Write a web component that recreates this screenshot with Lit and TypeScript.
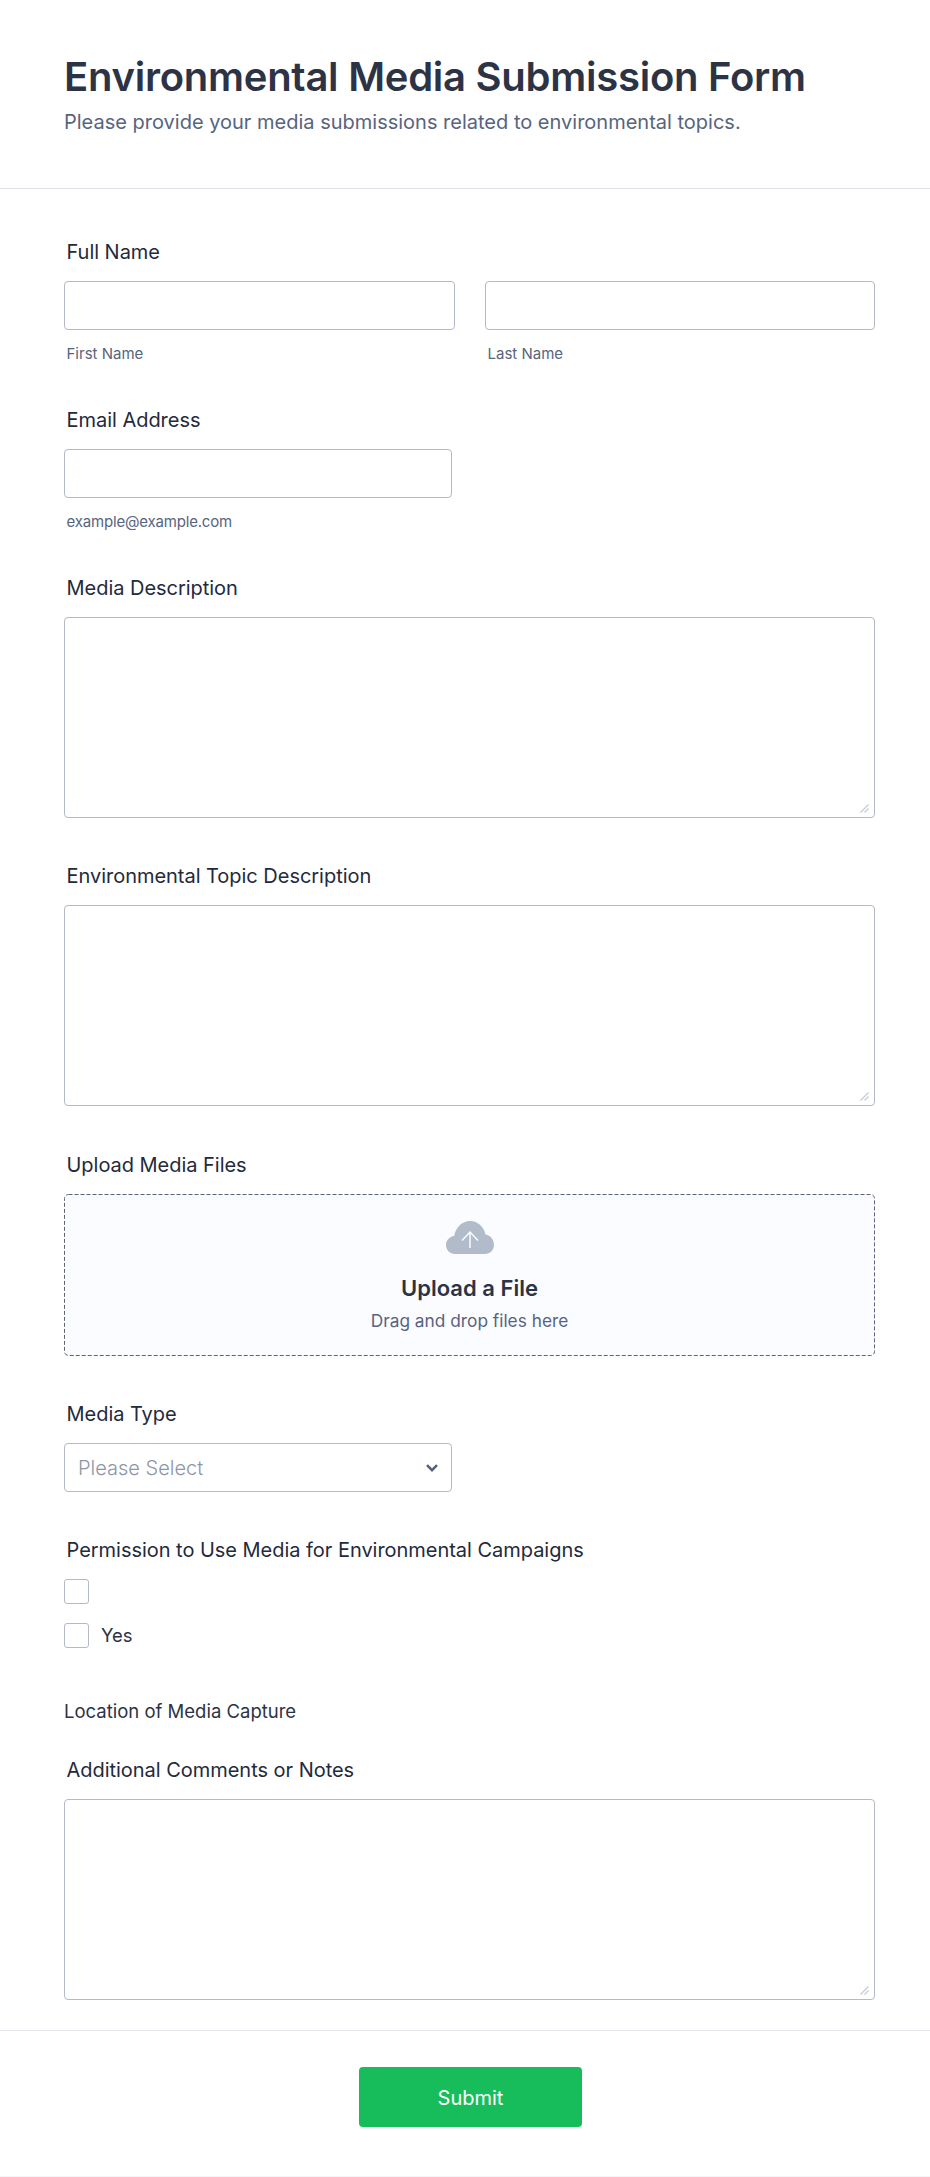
import { LitElement, html, css } from "lit";
import { customElement } from "lit/decorators.js";

@customElement("app-root")
export class AppRoot extends LitElement {
  static styles = css`
    :host { display: block; width: 930px; height: 2177px; background: #fff; font-family: Inter, "Liberation Sans", sans-serif; color: #2c3345; box-sizing: border-box; overflow: hidden; }
    * { box-sizing: border-box; }
    header { height: 189px; padding: 55px 55px 0 64px; border-bottom: 1px solid #dfe0e8; }
    h1 { margin: 0; font-size: 40px; line-height: 44px; font-weight: 600; letter-spacing: -0.26px; }
    .sub { margin: 9px 0 0; font-size: 20px; line-height: 28px; color: #57647e; font-weight: 400; }
    main { padding: 50px 55px 0 64px; }
    .field { margin-bottom: 45px; }
    .field.gap46 { margin-bottom: 46px; }
    .field.last-check { margin-bottom: 51px; }
    .field.end { margin-bottom: 30px; }
    label, .label { display: block; height: 25px; padding-top: 1px; line-height: 24px; margin: 0 0 17px 2.5px; font-size: 20px; letter-spacing: -0.03px; font-weight: 400; color: #232a3c; }
    input.text, textarea, .select { display: block; border: 1px solid #b4b9c8; border-radius: 4px; background: #fff; outline: none; width: 100%; }
    input.text { height: 49px; }
    .area { position: relative; }
    textarea { height: 201px; padding: 8px; resize: none; }
    .grip { position: absolute; right: 6px; bottom: 5px; width: 9px; height: 9px; }
    .narrow { width: 388px; }
    .two { display: grid; grid-template-columns: 391px 390px; gap: 30px; }
    .hint { display: block; margin: 16px 0 0 2.5px; font-size: 15px; line-height: 16px; color: #57647e; }
    .hint.mail { letter-spacing: -0.18px; }
    .upload { position: relative; height: 162px; border-radius: 4px; background: #fbfcff; display: flex; flex-direction: column; align-items: center; padding-top: 27px; }
    .dash { position: absolute; inset: 0; width: 811px; height: 162px; }
    .cloud { display: block; position: relative; }
    .upload b { margin-top: 20px; font-size: 22px; line-height: 28px; font-weight: 600; }
    .upload span { margin-top: 7px; font-size: 17.3px; line-height: 24px; color: #57647e; }
    .select { width: 388px; height: 49px; display: flex; align-items: center; justify-content: space-between; padding: 0 13px; font-size: 20px; font-weight: 300; color: #8d96a8; }
    .checks { display: flex; flex-direction: column; gap: 19px; }
    .check { display: flex; align-items: center; gap: 12px; height: 25px; font-size: 18.4px; color: #2c3345; }
    .check span { padding-bottom: 2px; }
    .check i { display: block; width: 25px; height: 25px; border: 1px solid #b4b9c8; border-radius: 3px; background: #fff; }
    .loc { margin: 0 0 34px; font-size: 18.5px; line-height: 24px; color: #2c3345; }
    footer { border-top: 1px solid #e6e6ec; padding-top: 36px; display: flex; justify-content: center; height: 147px; border-bottom: 1px solid #f5f5f8; }
    button { width: 223px; height: 60px; padding: 2px 0 0; border: none; border-radius: 4px; background: #18bd5b; color: #fff; font: 400 20px Inter, "Liberation Sans", sans-serif; margin-left: 11px; }
  `;

  private area() {
    return html`<div class="area">
      <textarea></textarea>
      <svg class="grip" viewBox="0 0 9 9"><path fill="none" stroke="#c6c9d6" stroke-width="1.200" d="M0.500 8.500L8.500 0.500M4.500 8.500L8.500 4.500"/></svg>
    </div>`;
  }

  render() {
    return html`
      <header>
        <h1>Environmental Media Submission Form</h1>
        <p class="sub">Please provide your media submissions related to environmental topics.</p>
      </header>
      <main>
        <div class="field">
          <span class="label">Full Name</span>
          <div class="two">
            <div><input class="text" type="text" /><span class="hint">First Name</span></div>
            <div><input class="text" type="text" /><span class="hint">Last Name</span></div>
          </div>
        </div>
        <div class="field narrow">
          <label>Email Address</label>
          <input class="text" type="email" />
          <span class="hint mail">example@example.com</span>
        </div>
        <div class="field">
          <label>Media Description</label>
          ${this.area()}
        </div>
        <div class="field gap46">
          <label>Environmental Topic Description</label>
          ${this.area()}
        </div>
        <div class="field">
          <label>Upload Media Files</label>
          <div class="upload">
            <svg class="dash" viewBox="0 0 811 162"><rect x="0.500" y="0.500" width="810" height="161" rx="4" fill="none" stroke="#5f6579" stroke-dasharray="4 2"/></svg>
            <svg class="cloud" width="48" height="33" viewBox="0 0 48 33">
              <path fill="#b1bbca" d="M9 33C4 33 0 29 0 24c0-4.800 3.400-8.500 8.200-9.100C9.800 6.400 16 0 24 0c7.700 0 13.800 5.600 15.500 13.400C44.400 14.300 48 18.600 48 24c0 5-4 9-9 9z"/>
              <path fill="none" stroke="#fbfcff" stroke-width="1.500" d="M24 27V11M16 19.500l8-8.500 8 8.500"/>
            </svg>
            <b>Upload a File</b>
            <span>Drag and drop files here</span>
          </div>
        </div>
        <div class="field">
          <label>Media Type</label>
          <div class="select">
            <span>Please Select</span>
            <svg width="12" height="8" viewBox="0 0 12 8"><path fill="none" stroke="#57607a" stroke-width="2.500" d="M1 1.200l5 5 5-5"/></svg>
          </div>
        </div>
        <div class="field last-check">
          <label>Permission to Use Media for Environmental Campaigns</label>
          <div class="checks">
            <div class="check"><i></i></div>
            <div class="check"><i></i><span>Yes</span></div>
          </div>
        </div>
        <p class="loc">Location of Media Capture</p>
        <div class="field end">
          <label>Additional Comments or Notes</label>
          ${this.area()}
        </div>
      </main>
      <footer><button>Submit</button></footer>
    `;
  }
}
